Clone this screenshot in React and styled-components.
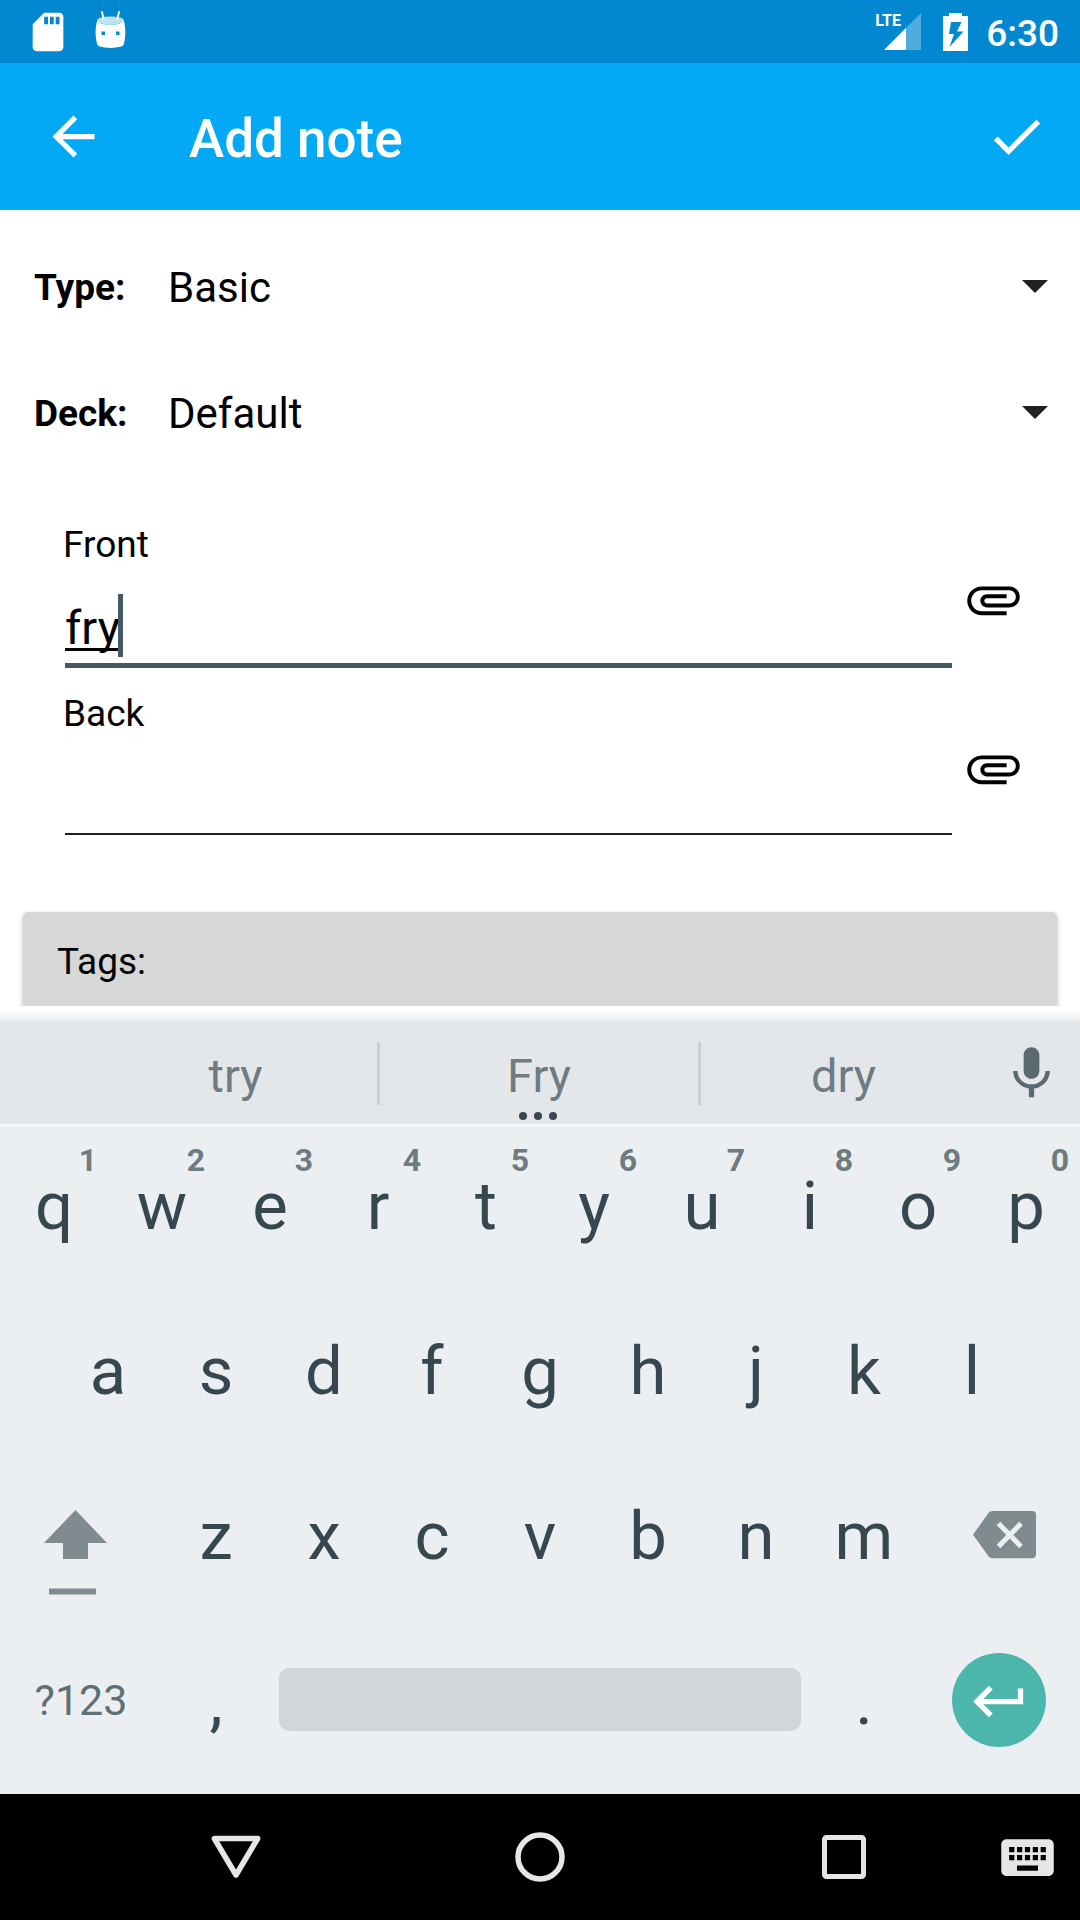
import React, { useState } from 'react';
import styled, { createGlobalStyle } from 'styled-components';

const GlobalStyle = createGlobalStyle`
  * { box-sizing: border-box; }
  body { margin: 0; background: #fff; }
  button, input, select { font-family: inherit; }
`;

const Screen = styled.div`
  display: flex;
  flex-direction: column;
  min-height: 100vh;
  font-family: Roboto, "Liberation Sans", sans-serif;
  color: #000;
  background: #fff;
`;

const PlainButton = styled.button`
  display: flex;
  align-items: center;
  justify-content: center;
  margin: 0;
  padding: 0;
  border: 0;
  background: none;
  color: inherit;
  outline: none;
  cursor: pointer;
`;

const Icon = styled.svg`
  display: block;
  flex: none;
  fill: currentColor;
`;

/* Status bar */

const StatusBar = styled.header`
  display: flex;
  align-items: center;
  justify-content: space-between;
  height: 63px;
  padding: 0 21px 0 25px;
  background: #0288d1;
  color: #fff;
`;

const StatusGroup = styled.div`
  display: flex;
  align-items: center;
  gap: ${(p) => p.$gap}px;
`;

const Signal = styled.div`
  position: relative;
  margin-right: 4px;
`;

const NetworkType = styled.span`
  position: absolute;
  top: 0;
  left: 0;
  font-size: 16px;
  line-height: 16px;
  font-weight: 700;
`;

const Clock = styled.time`
  padding-top: 4px;
  font-size: 37px;
  line-height: 44px;
  font-weight: 500;
`;

/* App bar */

const AppBar = styled.nav`
  display: flex;
  align-items: center;
  height: 147px;
  padding: 0 32px 0 42px;
  background: #03a9f4;
  color: #fff;
`;

const Title = styled.h1`
  flex: 1;
  margin: 0;
  padding: 4px 0 0 84px;
  font-size: 53px;
  line-height: 62px;
  font-weight: 500;
`;

/* Form */

const Form = styled.main`
  flex: 1;
  display: flex;
  flex-direction: column;
  padding-top: 14px;
  overflow: hidden;
`;

const PickerRow = styled.div`
  position: relative;
  display: grid;
  grid-template-columns: 134px 1fr;
  align-items: center;
  height: 126px;
  padding: 0 32px 0 34px;
`;

const PickerLabel = styled.label`
  padding-top: 2px;
  font-size: 37px;
  line-height: 44px;
  font-weight: 700;
`;

const Picker = styled.select`
  appearance: none;
  width: 100%;
  height: 84px;
  padding: 0;
  border: 0;
  outline: none;
  background: none;
  color: #000;
  font-size: 42px;
`;

const PickerArrow = styled(Icon)`
  position: absolute;
  right: 32px;
  top: 56px;
  color: #212121;
  pointer-events: none;
`;

const Fields = styled.div`
  display: flex;
  flex-direction: column;
  gap: 15px;
  padding: 46px 55px 0 63px;
`;

const Field = styled.div`
  display: flex;
  align-items: center;
  gap: 10px;
  min-height: 154px;
`;

const FieldBody = styled.div`
  flex: 1;
  align-self: flex-start;
  display: flex;
  flex-direction: column;
  gap: 26px;
`;

const FieldLabel = styled.label`
  font-size: 37px;
  line-height: 46px;
`;

const InputWrap = styled.div`
  position: relative;
  margin-left: 2px;
`;

const TextInput = styled.input`
  display: block;
  width: 100%;
  height: ${(p) => (p.$active ? 74 : 72)}px;
  padding: 0 0 2px;
  border: 0;
  border-bottom: ${(p) => (p.$active ? '5px solid #455a64' : '2px solid #212121')};
  border-radius: 0;
  outline: none;
  background: none;
  color: #000;
  font-size: 47px;
  text-decoration: ${(p) => (p.$active ? 'underline' : 'none')};
  text-decoration-thickness: 3px;
  text-underline-offset: 4px;
  text-decoration-skip-ink: none;
`;

const Caret = styled.span`
  position: absolute;
  top: 0;
  left: 53px;
  width: 5px;
  height: 63px;
  background: #455a64;
`;

const TagsButton = styled.button`
  height: 94px;
  margin: 67px 23px 0;
  padding: 28px 34px 22px;
  border: 0;
  border-radius: 5px 5px 0 0;
  background: #d6d7d7;
  box-shadow: 0 2px 5px rgba(0, 0, 0, 0.28);
  color: #000;
  font-size: 37px;
  line-height: 44px;
  text-align: left;
`;

/* Keyboard */

const Keyboard = styled.section`
  background: #eceff1;
`;

const KeyboardShadow = styled.div`
  height: 16px;
  background: linear-gradient(#fff 25%, #f6f6f7 65%, #e8e9ea);
`;

const Suggestions = styled.div`
  display: grid;
  grid-template-columns: 94px 283fr 3px 318fr 3px 285fr 94px;
  align-items: center;
  height: 102px;
  background: #e3e7ea;
  color: #5b6a70;
`;

const Suggestion = styled(PlainButton)`
  position: relative;
  height: 102px;
  padding-top: 4px;
  color: #6e7b81;
  font-size: 47px;
`;

const VoiceButton = styled(PlainButton)`
  padding-right: 4px;
`;

const Divider = styled.span`
  height: 63px;
  background: #cbd0d3;
`;

const MoreDots = styled(Icon)`
  position: absolute;
  left: calc(50% - 20px);
  bottom: 4px;
  color: #37474f;
`;

const Keys = styled.div`
  padding-bottom: 10px;
  box-shadow: inset 0 3px #f5f7f8;
`;

const KeyRow = styled.div`
  display: flex;
  height: 165px;
  padding: 0 ${(p) => (p.$inset ? '5%' : '0')};
`;

const Key = styled(PlainButton)`
  position: relative;
  flex: ${(p) => p.$span || 2} 1 0;
  min-width: 0;
  padding-bottom: ${(p) => p.$lift ?? 2}px;
  color: ${(p) => (p.$muted ? '#5f6f75' : '#37474f')};
  font-size: ${(p) => (p.$muted ? 43 : 67)}px;
`;

const KeyHint = styled.span`
  position: absolute;
  top: 18px;
  right: 11px;
  color: #6e7b81;
  font-size: 32px;
  line-height: 36px;
  font-weight: 700;
`;

const SpaceBar = styled.span`
  flex: 1;
  height: 63px;
  margin: 0 9px;
  border-radius: 10px;
  background: #d1d6d9;
`;

const EnterDisc = styled.span`
  display: flex;
  align-items: center;
  justify-content: center;
  width: 94px;
  height: 94px;
  padding-top: 4px;
  border-radius: 50%;
  background: #4db6ac;
  color: #fff;
`;

/* Navigation bar */

const NavBar = styled.footer`
  display: grid;
  grid-template-columns: 84px 1fr 1fr 1fr 84px;
  height: 126px;
  background: #000;
  color: #e6e6e6;
`;

const NavButton = styled(PlainButton)`
  justify-content: ${(p) => (p.$start ? 'flex-start' : 'center')};
  grid-column-start: ${(p) => p.$column};
`;

const MaterialIcon = ({ d, size = 63 }) => (
  <Icon width={size} height={size} viewBox="0 0 24 24" aria-hidden="true">
    <path d={d} />
  </Icon>
);

const ICONS = {
  sdCard:
    'M18 2h-8L4.02 8 4 20c0 1.1.9 2 2 2h12c1.1 0 2-.9 2-2V4c0-1.1-.9-2-2-2zm-6 6h-2V4h2v4zm3 0h-2V4h2v4zm3 0h-2V4h2v4z',
  back: 'M20 11H7.83l5.59-5.59L12 4l-8 8 8 8 1.41-1.41L7.83 13H20v-2z',
  check: 'M9 16.17L4.83 12l-1.42 1.41L9 19 21 7l-1.41-1.41z',
  attachment:
    'M7.5 18C4.46 18 2 15.54 2 12.5S4.46 7 7.5 7H18c2.21 0 4 1.79 4 4s-1.79 4-4 4H9.5C8.12 15 7 13.88 7 12.5S8.12 10 9.5 10H17v1.5H9.5c-.55 0-1 .45-1 1s.45 1 1 1H18c1.38 0 2.5-1.12 2.5-2.5S19.38 8.5 18 8.5H7.5c-2.21 0-4 1.79-4 4s1.79 4 4 4H17V18H7.5z',
  mic: 'M12 14c1.66 0 2.99-1.34 2.99-3L15 5c0-1.66-1.34-3-3-3S9 3.34 9 5v6c0 1.66 1.34 3 3 3zm5.3-3c0 3-2.54 5.1-5.3 5.1S6.7 14 6.7 11H5c0 3.41 2.72 6.23 6 6.72V21h2v-3.28c3.28-.48 6-3.3 6-6.72h-1.7z',
  enter: 'M19 7v4H5.83l3.58-3.59L8 6l-6 6 6 6 1.41-1.41L5.83 13H21V7z',
  keyboard:
    'M20 5H4c-1.1 0-1.99.9-1.99 2L2 17c0 1.1.9 2 2 2h16c1.1 0 2-.9 2-2V7c0-1.1-.9-2-2-2zm-9 3h2v2h-2V8zm0 3h2v2h-2v-2zM8 8h2v2H8V8zm0 3h2v2H8v-2zm-1 2H5v-2h2v2zm0-3H5V8h2v2zm9 7H8v-2h8v2zm0-4h-2v-2h2v2zm0-3h-2V8h2v2zm3 3h-2v-2h2v2zm0-3h-2V8h2v2z',
};

const RobotIcon = () => (
  <Icon width="36" height="44" viewBox="0 2 36 44" aria-hidden="true">
    <path d="M10 4l1.6 7M27 4l-1.6 7" stroke="#fff" strokeWidth="1.8" strokeLinecap="round" />
    <ellipse cx="18.5" cy="12.4" rx="13.3" ry="4" opacity="0.75" />
    <path
      fillRule="evenodd"
      d="M5.2 12.4c2 3.2 7 4.2 13.3 4.2s11.3-1 13.3-4.2c1.8 6 2.3 15 .2 23.200c-.4 1.700-1.200 2.500-2.700 3c-6.800 1.900-14.800 1.900-21.600 0c-1.500-.5-2.300-1.300-2.700-3c-2.100-8.200-1.600-17.200.2-23.200zM9.500 23.500v3.500h3.500v-3.500zM24 23.500v3.500h3.500v-3.500z"
    />
  </Icon>
);

const SignalIcon = () => (
  <Icon width="46" height="38" viewBox="0 0 46 38" aria-hidden="true">
    <path d="M46 0v37H9z" opacity="0.3" />
    <path d="M31 15v22H9z" />
  </Icon>
);

const BatteryIcon = () => (
  <Icon width="25" height="38" viewBox="0 0 25 38" aria-hidden="true">
    <path fillRule="evenodd" d="M6 0h13v3h6v35H0V3h6zM8 9L6 21h5L6.500 34L20.500 18.500h-6.500L18.500 9z" />
  </Icon>
);

const ShiftIcon = () => (
  <Icon width="162" height="165" viewBox="0 0 162 165" aria-hidden="true">
    <path fill="#808b8f" d="M75.500 56L107 89H88v16H63V89H44zM49 134.500h47v6H49z" />
  </Icon>
);

const DeleteIcon = () => (
  <Icon width="162" height="165" viewBox="0 0 162 165" aria-hidden="true">
    <path
      fill="#808b8f"
      d="M74.500 57H114a4 4 0 0 1 4 4v39.300a4 4 0 0 1-4 4H74.500a5 5 0 0 1-4-2L55 80.700L70.500 59a5 5 0 0 1 4-2z"
    />
    <path d="M80.500 69.500l22.500 23M103 69.500l-22.500 23" stroke="#eceff1" strokeWidth="5" />
  </Icon>
);

const TOP_ROW = ['q1', 'w2', 'e3', 'r4', 't5', 'y6', 'u7', 'i8', 'o9', 'p0'];

function NoteField({ id, label, value, onChange, active }) {
  return (
    <Field>
      <FieldBody>
        <FieldLabel htmlFor={id}>{label}</FieldLabel>
        <InputWrap>
          <TextInput
            id={id}
            type="text"
            spellCheck={false}
            autoComplete="off"
            value={value}
            onChange={(e) => onChange(e.target.value)}
            $active={active}
          />
          {active && <Caret />}
        </InputWrap>
      </FieldBody>
      <PlainButton type="button" aria-label={`Attach to ${label}`}>
        <MaterialIcon d={ICONS.attachment} />
      </PlainButton>
    </Field>
  );
}

function PickerField({ id, label, options }) {
  return (
    <PickerRow>
      <PickerLabel htmlFor={id}>{label}</PickerLabel>
      <Picker id={id}>
        {options.map((o) => (
          <option key={o}>{o}</option>
        ))}
      </Picker>
      <PickerArrow width="26" height="13" viewBox="0 0 26 13" aria-hidden="true">
        <path d="M0 0h26L13 13z" />
      </PickerArrow>
    </PickerRow>
  );
}

export default function App() {
  const [front, setFront] = useState('fry');
  const [back, setBack] = useState('');

  return (
    <Screen>
      <GlobalStyle />
      <StatusBar>
        <StatusGroup $gap={21}>
          <MaterialIcon d={ICONS.sdCard} size={46} />
          <RobotIcon />
        </StatusGroup>
        <StatusGroup $gap={18}>
          <Signal>
            <SignalIcon />
            <NetworkType>LTE</NetworkType>
          </Signal>
          <BatteryIcon />
          <Clock>6:30</Clock>
        </StatusGroup>
      </StatusBar>

      <AppBar>
        <PlainButton type="button" aria-label="Back">
          <MaterialIcon d={ICONS.back} />
        </PlainButton>
        <Title>Add note</Title>
        <PlainButton type="button" aria-label="Save">
          <MaterialIcon d={ICONS.check} />
        </PlainButton>
      </AppBar>

      <Form>
        <PickerField id="type" label="Type:" options={['Basic']} />
        <PickerField id="deck" label="Deck:" options={['Default']} />
        <Fields>
          <NoteField id="front" label="Front" value={front} onChange={setFront} active />
          <NoteField id="back" label="Back" value={back} onChange={setBack} />
        </Fields>
        <TagsButton type="button">Tags:</TagsButton>
      </Form>

      <Keyboard>
        <KeyboardShadow />
        <Suggestions>
          <span />
          <Suggestion type="button">try</Suggestion>
          <Divider />
          <Suggestion type="button">
            Fry
            <MoreDots width="40" height="8" viewBox="0 0 40 8" aria-hidden="true">
              <circle cx="4" cy="4" r="4" />
              <circle cx="19" cy="4" r="4" />
              <circle cx="34" cy="4" r="4" />
            </MoreDots>
          </Suggestion>
          <Divider />
          <Suggestion type="button">dry</Suggestion>
          <VoiceButton type="button" aria-label="Voice input">
            <MaterialIcon d={ICONS.mic} />
          </VoiceButton>
        </Suggestions>
        <Keys>
          <KeyRow>
            {TOP_ROW.map(([letter, digit]) => (
              <Key type="button" key={letter}>
                {letter}
                <KeyHint>{digit}</KeyHint>
              </Key>
            ))}
          </KeyRow>
          <KeyRow $inset>
            {[...'asdfghjkl'].map((letter) => (
              <Key type="button" key={letter}>
                {letter}
              </Key>
            ))}
          </KeyRow>
          <KeyRow>
            <Key type="button" $span={3} $lift={0} aria-label="Shift">
              <ShiftIcon />
            </Key>
            {[...'zxcvbnm'].map((letter) => (
              <Key type="button" key={letter}>
                {letter}
              </Key>
            ))}
            <Key type="button" $span={3} $lift={0} aria-label="Delete">
              <DeleteIcon />
            </Key>
          </KeyRow>
          <KeyRow>
            <Key type="button" $span={3} $lift={4} $muted>
              ?123
            </Key>
            <Key type="button">,</Key>
            <Key type="button" $span={10} $lift={4} aria-label="Space">
              <SpaceBar />
            </Key>
            <Key type="button">.</Key>
            <Key type="button" $span={3} $lift={4} aria-label="Enter">
              <EnterDisc>
                <MaterialIcon d={ICONS.enter} />
              </EnterDisc>
            </Key>
          </KeyRow>
        </Keys>
      </Keyboard>

      <NavBar>
        <NavButton type="button" $column={2} aria-label="Close keyboard">
          <Icon width="50" height="44" viewBox="0 0 50 44" aria-hidden="true">
            <path
              d="M3.300 3.500h43.400L25 40z"
              fill="none"
              stroke="currentColor"
              strokeWidth="5.500"
              strokeLinejoin="round"
            />
          </Icon>
        </NavButton>
        <NavButton type="button" $column={3} aria-label="Home">
          <Icon width="50" height="50" viewBox="0 0 50 50" aria-hidden="true">
            <circle cx="25" cy="25" r="22" fill="none" stroke="currentColor" strokeWidth="5.500" />
          </Icon>
        </NavButton>
        <NavButton type="button" $column={4} aria-label="Recent apps">
          <Icon width="44" height="44" viewBox="0 0 44 44" aria-hidden="true">
            <rect x="2.500" y="2.500" width="39" height="39" rx="2" fill="none" stroke="currentColor" strokeWidth="5" />
          </Icon>
        </NavButton>
        <NavButton type="button" $column={5} $start aria-label="Switch keyboard">
          <MaterialIcon d={ICONS.keyboard} />
        </NavButton>
      </NavBar>
    </Screen>
  );
}
